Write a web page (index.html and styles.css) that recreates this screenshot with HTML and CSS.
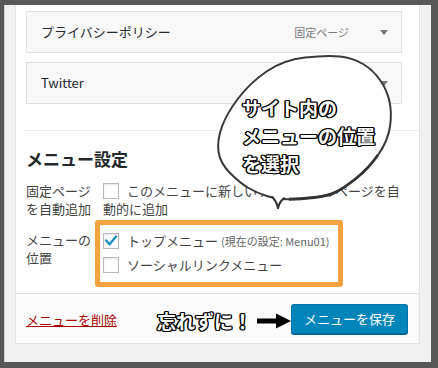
FILE: index.html
```html
<!DOCTYPE html>
<html lang="ja">
<head>
<meta charset="utf-8">
<title>メニュー設定</title>
<link rel="stylesheet" href="styles.css">
</head>
<body>
<div class="frame">
  <div class="panel">
    <div class="items">
      <div class="item">
        <span class="title">プライバシーポリシー</span>
        <span class="controls"><span class="type">固定ページ</span><span class="tri"></span></span>
      </div>
      <div class="item">
        <span class="title">Twitter</span>
        <span class="controls"><span class="type">カスタムリンク</span><span class="tri"></span></span>
      </div>
    </div>
    <div class="sep"></div>
    <div class="settings">
      <h3 class="heading">メニュー設定</h3>
      <div class="row row-auto">
        <div class="label">固定ページを自動追加</div>
        <div class="field-auto"><span class="cb"></span>このメニューに新しいトップレベルページを自動的に追加</div>
      </div>
      <div class="row row-loc">
        <div class="label label-loc">メニューの位置</div>
        <div class="locbox">
          <div class="opt"><span class="cb"><svg class="check" viewBox="0 0 16 16" width="16" height="16"><path d="M3.2 7.6 L6.6 11.2 L12.9 3.6" fill="none" stroke="#1e8cbe" stroke-width="2.3" stroke-linecap="square"/></svg></span>トップメニュー <span class="cur">(現在の設定: Menu01)</span></div>
          <div class="opt"><span class="cb"></span>ソーシャルリンクメニュー</div>
        </div>
      </div>
    </div>
    <div class="footer">
      <a class="delete" href="#">メニューを削除</a>
      <span class="remind">忘れずに！</span>
      <svg class="pointer" width="34" height="16" viewBox="0 0 34 16"><rect x="0" y="5.5" width="21" height="5" fill="#000"/><polygon points="19,0.5 34,8 19,15.5" fill="#000"/></svg>
      <button class="save">メニューを保存</button>
    </div>
  </div>
</div>
<svg class="bubble" width="438" height="368" viewBox="0 0 438 368">
  <path d="M305,57.5 Q327,55 340,56.5 Q353,58 363,64 Q373,70 380,80 Q387,90 389.5,101.5 Q392,113 390,126.5 Q388,141 378,155 Q368,169 356,178.5 Q344,188 336,192 Q328,196 314,197.5 Q300,199 289,199.25 Q278,199.5 267.5,196.25 Q257,193 248.5,188 Q240,183 230,173 Q220,163 218.5,151.5 Q217,140 222,126.5 Q227,113 238.5,98 Q250,83 266.5,71.5 Q283,60 305,57.5 Z" fill="#fff" stroke="#3a3a3a" stroke-width="2"/>
  <path d="M378,155 Q368,169 356,178.5 Q344,188 336,192 Q328,196 314,197.5 Q300,199 289,199.25" fill="none" stroke="#333" stroke-width="2.8"/>
  <path d="M271.5,196.5 Q276,200 278,208 Q280,200 285,198" fill="#fff" stroke="#333" stroke-width="2.2" stroke-linejoin="round"/>
  <polygon points="273,195 278,202.5 283.5,196.5 278,194" fill="#fff"/>
</svg>
<div class="bubble-text">サイト内の<br>メニューの位置<br>を選択</div>
</body>
</html>
```
FILE: styles.css
```css
* { box-sizing: border-box; }
html, body { margin: 0; padding: 0; }
body {
  position: relative;
  width: 438px;
  height: 368px;
  overflow: hidden;
  font-family: "Noto Sans CJK JP", "Noto Sans", sans-serif;
  font-size: 13px;
  color: #444;
}
.frame {
  height: 368px;
  border-style: solid;
  border-color: #585858;
  border-width: 5px 7px 6px 4px;
  background: #f1f1f1;
  padding: 0 11px 0 11px;
  box-shadow: inset 1px 0 0 #cfcfcf;
}
.panel {
  background: #fff;
  border: 1px solid #e2e2e2;
  border-top: none;
}
.items {
  padding: 6px 0 0 10px;
  display: flex;
  flex-direction: column;
  gap: 9px;
}
.item {
  width: 376px;
  height: 42px;
  border: 1px solid #dfdfdf;
  background: #f8f8f8;
  display: flex;
  align-items: center;
  justify-content: space-between;
  padding: 0 13px 0 14px;
  line-height: 40px;
}
.title { font-size: 13px; color: #23282d; }
.controls { display: flex; align-items: center; }
.type { font-size: 11px; color: #777; margin-right: 31px; }
.tri {
  width: 0; height: 0;
  border-left: 4px solid transparent;
  border-right: 4px solid transparent;
  border-top: 5px solid #777;
}
.sep {
  margin: 26px 0 0 8px;
  height: 1px;
  background: #eee;
}
.settings { padding: 0 0 6px 10px; }
.heading {
  margin: 16px 0 11px 0;
  font-size: 17px;
  line-height: 24px;
  font-weight: 600;
  color: #23282d;
}
.row { display: flex; align-items: flex-start; }
.label {
  width: 69px;
  line-height: 18px;
  color: #444;
}
.field-auto {
  width: 307px;
  padding-left: 8px;
  line-height: 18px;
}
.cb {
  display: inline-block;
  width: 16px;
  height: 16px;
  border: 1px solid #b4b9be;
  background: #fff;
  box-shadow: inset 0 1px 2px rgba(0,0,0,0.1);
  vertical-align: -3px;
  margin-right: 8px;
  position: relative;
}
.check { position: absolute; left: -1px; top: -1px; }
.row-loc { margin-top: 2px; }
.label-loc { margin-top: 11px; }
.locbox {
  width: 248px;
  border: 5px solid #f4a340;
  border-radius: 3px;
  padding: 4px 6px 6px 3px;
}
.opt { line-height: 23px; white-space: nowrap; }
.cur { font-size: 11px; color: #666; }
.footer {
  border-top: 1px solid #dcdcdc;
  background: #fbfbfb;
  padding: 10px 11px 9px 10px;
  display: flex;
  align-items: center;
}
.delete {
  color: #a00;
  text-decoration: underline;
  font-size: 13px;
}
.remind {
  margin-left: auto;
  font-size: 19px;
  font-weight: 700;
  line-height: 24px;
  color: #fff;
  margin-top: 3px;
  text-shadow: -1px -1px 0 #000, 1px -1px 0 #000, -1px 1px 0 #000, 1px 1px 0 #000,
    0 -1.4px 0 #000, 0 1.4px 0 #000, -1.4px 0 0 #000, 1.4px 0 0 #000;
}
.pointer { margin-left: 5px; margin-top: 3px; display: block; }
.save {
  height: 30px;
  padding: 0 12px;
  font-family: "Noto Sans CJK JP", "Noto Sans", sans-serif;
  font-size: 13px;
  color: #fff;
  background: #0085ba;
  border: 1px solid #0073aa;
  border-bottom-color: #006799;
  border-radius: 3px;
  box-shadow: 0 1px 0 #006799;
  line-height: 28px;
}
.bubble {
  position: absolute;
  left: 0;
  top: 0;
  pointer-events: none;
}
.bubble-text {
  position: absolute;
  left: 242px;
  top: 94px;
  font-size: 19px;
  font-weight: 700;
  line-height: 28px;
  color: #fff;
  text-shadow: -1px -1px 0 #000, 1px -1px 0 #000, -1px 1px 0 #000, 1px 1px 0 #000,
    0 -1.4px 0 #000, 0 1.4px 0 #000, -1.4px 0 0 #000, 1.4px 0 0 #000;
}
```
